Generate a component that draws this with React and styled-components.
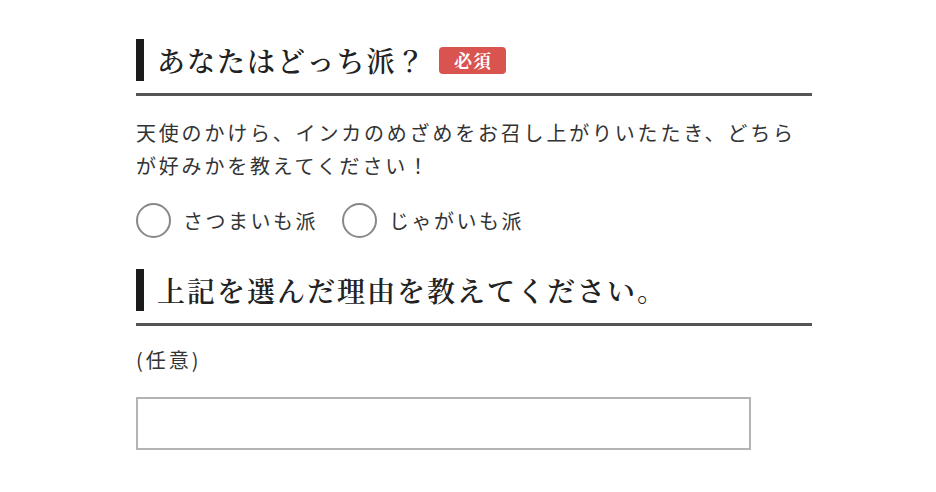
import React from "react";
import styled, { createGlobalStyle } from "styled-components";

const Global = createGlobalStyle`
  html, body { margin: 0; padding: 0; background: #fff; }
  body { font-family: "Noto Sans CJK JP", "Noto Sans", sans-serif; color: #333; }
`;

const Page = styled.div`
  padding: 39px 0 0 136px;
`;

const Form = styled.div`
  width: 676px;
  display: flex;
  flex-direction: column;
`;

const HeadingWrap = styled.div`
  border-bottom: 3px solid #555;
  padding-bottom: 12px;
  margin-top: ${p => p.$mt || 0}px;
`;

const Heading = styled.h2`
  margin: 0;
  height: 42px;
  border-left: 8px solid #1c1a1a;
  padding-left: 13px;
  display: flex;
  align-items: center;
  gap: 13px;
  font-family: "Noto Serif CJK JP", "Noto Serif JP", "Noto Sans CJK JP", serif;
  font-weight: 600;
  font-size: 28px;
  letter-spacing: 2px;
  color: #222;
`;

const Badge = styled.span`
  display: inline-flex;
  align-items: center;
  justify-content: center;
  width: 67px;
  height: 27px;
  border-radius: 4px;
  background: #d9534f;
  color: #fff;
  font-size: 18px;
  font-weight: 700;
  letter-spacing: 1px;
`;

const Text = styled.p`
  margin: ${p => p.$mt || 0}px 0 0;
  font-size: 20px;
  line-height: 33px;
  letter-spacing: ${p => p.$ls ?? 2.8}px;
  color: #333;
`;

const Options = styled.div`
  display: flex;
  gap: 24px;
  margin-top: 21px;
`;

const Option = styled.label`
  display: flex;
  align-items: center;
  gap: 12px;
  font-size: 20px;
  letter-spacing: 2.5px;
  color: #333;
`;

const Radio = styled.span`
  width: 31px;
  height: 31px;
  border: 2px solid #888;
  border-radius: 50%;
  background: #fff;
  flex: none;
`;

const Input = styled.div`
  margin-top: 21px;
  width: 611px;
  height: 49px;
  border: 2px solid #b4b4b4;
  background: #fff;
`;

export default function App() {
  return (
    <Page>
      <Global />
      <Form>
        <HeadingWrap>
          <Heading>
            あなたはどっち派？<Badge>必須</Badge>
          </Heading>
        </HeadingWrap>
        <Text $mt={20}>
          天使のかけら、インカのめざめをお召し上がりいたたき、どちらが好みかを教えてください！
        </Text>
        <Options>
          <Option><Radio />さつまいも派</Option>
          <Option><Radio />じゃがいも派</Option>
        </Options>
        <HeadingWrap $mt={31}>
          <Heading>上記を選んだ理由を教えてください。</Heading>
        </HeadingWrap>
        <Text $mt={17} $ls={3}>(任意)</Text>
        <Input />
      </Form>
    </Page>
  );
}
